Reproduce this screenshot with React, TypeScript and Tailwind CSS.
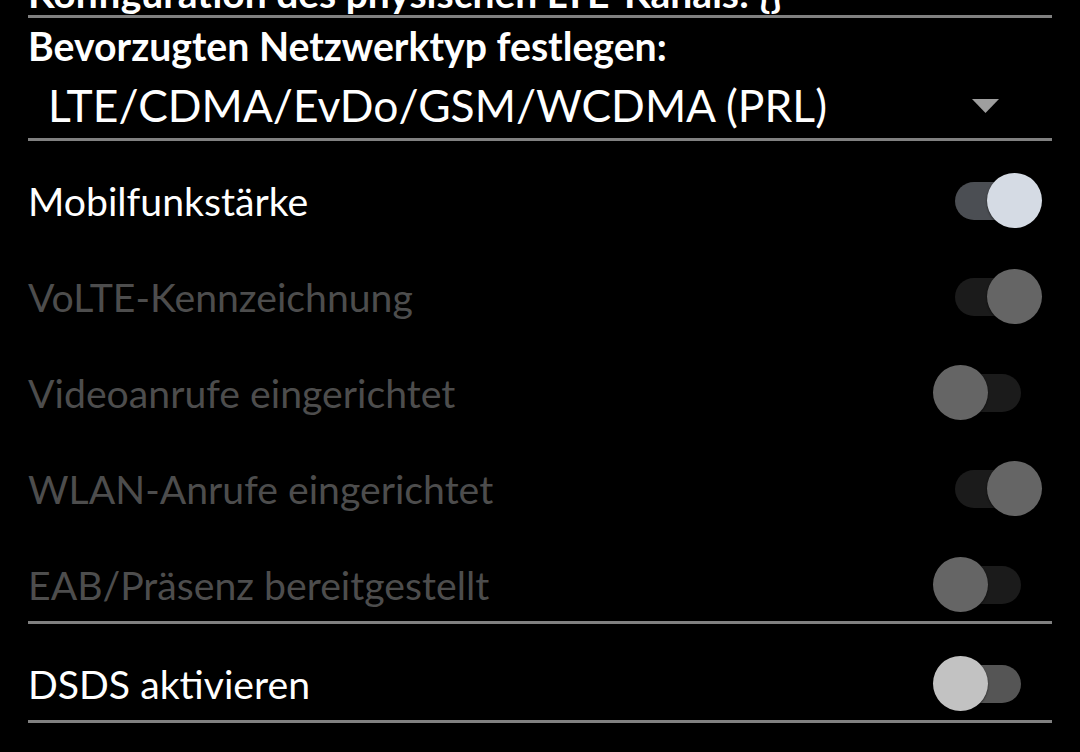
import React from 'react';

type Row = { label: string; on: boolean; disabled: boolean };

const rows: Row[] = [
  { label: 'Mobilfunkstärke', on: true, disabled: false },
  { label: 'VoLTE-Kennzeichnung', on: true, disabled: true },
  { label: 'Videoanrufe eingerichtet', on: false, disabled: true },
  { label: 'WLAN-Anrufe eingerichtet', on: true, disabled: true },
  { label: 'EAB/Präsenz bereitgestellt', on: false, disabled: true },
];

// Android style switch: track with an overlapping round thumb
function Switch({ on, disabled }: { on: boolean; disabled: boolean }) {
  let track = 'bg-[#555555]';
  let thumb = 'bg-[#c2c2c2]';
  if (disabled) {
    track = 'bg-[#1b1b1b]';
    thumb = 'bg-[#656565]';
  } else if (on) {
    track = 'bg-[#4b4e53]';
    thumb = 'bg-[#d5dbe4]';
  }
  return (
    <div className="relative mr-[9px] h-[56px] w-[110px] shrink-0">
      <div className={`absolute left-[22px] top-[9px] h-[38px] w-[66px] rounded-full ${track}`} />
      <div
        className={`absolute top-0 h-[55px] w-[55px] rounded-full shadow-[0_1px_2px_rgba(0,0,0,0.6)] ${thumb} ${
          on ? 'left-[54px]' : 'left-0'
        }`}
      />
    </div>
  );
}

function Divider() {
  return <div className="h-[3px] bg-[#808080]" />;
}

export default function App() {
  return (
    <div className="h-[752px] w-[1080px] overflow-hidden bg-black px-[28px] font-['Lato',sans-serif] text-white">
      {/* cut off line at the top */}
      <div className="h-[15px] overflow-hidden">
        <div className="mt-[-26px] text-[39px] font-bold leading-[38px] whitespace-nowrap">
          Konfiguration des physischen LTE-Kanals: {'{}'}
        </div>
      </div>
      <Divider />

      <div className="mt-[5px] text-[39.2px] font-bold leading-[46px]">Bevorzugten Netzwerktyp festlegen:</div>
      <div className="mt-[10px] flex h-[52px] items-center justify-between pl-[20px] pr-[53px]">
        <span className="text-[44.4px] leading-[52px]">LTE/CDMA/EvDo/GSM/WCDMA (PRL)</span>
        <svg width="27" height="14" viewBox="0 0 27 14" className="mt-[2px]">
          <polygon points="0,0 27,0 13.5,14" fill="#9e9e9e" />
        </svg>
      </div>
      <div className="mt-[7px]">
        <Divider />
      </div>

      {rows.map((r) => (
        <div key={r.label} className="flex h-[96px] items-center justify-between pt-[24px]">
          <span className={`text-[39.2px] leading-[44px] ${r.disabled ? 'text-[#4d4d4d]' : 'text-white'}`}>
            {r.label}
          </span>
          <Switch on={r.on} disabled={r.disabled} />
        </div>
      ))}
      <Divider />

      <div className="flex h-[96px] items-center justify-between pt-[24px]">
        <span className="text-[39.2px] leading-[44px]">DSDS aktivieren</span>
        <Switch on={false} disabled={false} />
      </div>
      <Divider />
    </div>
  );
}
